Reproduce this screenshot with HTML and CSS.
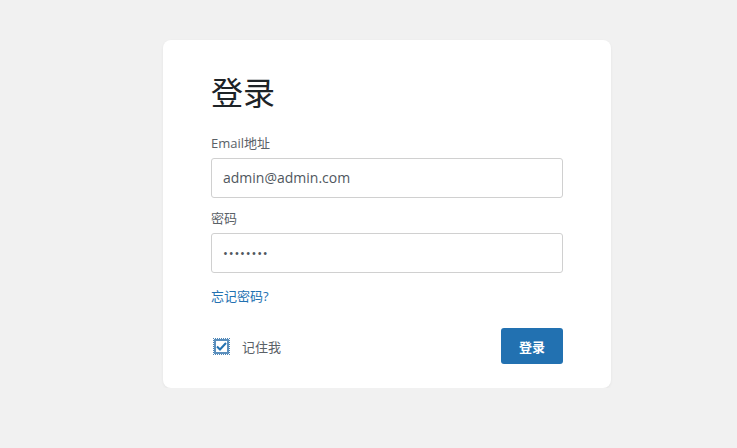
FILE: index.html
```html
<!DOCTYPE html>
<html lang="zh">
<head>
<meta charset="utf-8">
<link rel="stylesheet" href="styles.css">
</head>
<body>
<div class="page">
  <form class="card">
    <h1 class="title">登录</h1>
    <label class="label">Email地址</label>
    <div class="input">admin@admin.com</div>
    <label class="label">密码</label>
    <div class="input pw">••••••••</div>
    <a class="forgot">忘记密码?</a>
    <div class="footer">
      <div class="remember">
        <span class="check"><svg width="11" height="9" viewBox="0 0 11 9"><path d="M1 4.5 L4 7.5 L10 1" fill="none" stroke="#2271b1" stroke-width="2"/></svg></span>
        <span class="remember-text">记住我</span>
      </div>
      <button class="btn" type="button">登录</button>
    </div>
  </form>
</div>
</body>
</html>
```
FILE: styles.css
```css
html, body { margin: 0; padding: 0; }
body {
  background: #f1f1f1;
  font-family: "Open Sans", "Noto Sans CJK SC", sans-serif;
  color: #3c434a;
}
.page {
  display: flex;
  padding: 40px 0 0 163px;
}
.card {
  box-sizing: border-box;
  width: 448px;
  height: 348px;
  background: #fff;
  border-radius: 8px;
  box-shadow: 0 1px 3px rgba(0,0,0,0.06);
  padding: 29px 48px 0 48px;
  display: flex;
  flex-direction: column;
}
.title {
  margin: 0;
  font-size: 32px;
  font-weight: 400;
  line-height: 44px;
  color: #1d2327;
  font-family: "Noto Sans CJK SC", sans-serif;
}
.label {
  display: block;
  font-size: 13px;
  line-height: 18px;
  color: #5a6167;
  margin-top: 20px;
  margin-bottom: 6px;
}
.title + .label { margin-top: 21px; }
.input + .label { margin-top: 11px; }
.input {
  box-sizing: border-box;
  height: 40px;
  border: 1px solid #d0d0d0;
  border-radius: 3px;
  padding: 0 11px;
  font-size: 14px;
  line-height: 38px;
  color: #50575e;
}
.pw {
  font-size: 13px;
  letter-spacing: 0.8px;
  color: #50575e;
}
.forgot {
  margin-top: 14px;
  font-size: 13px;
  line-height: 18px;
  color: #2271b1;
}
.footer {
  margin-top: 23px;
  display: flex;
  align-items: center;
  justify-content: space-between;
}
.remember {
  display: flex;
  align-items: center;
  gap: 12px;
  padding-left: 2px;
}
.check {
  box-sizing: border-box;
  width: 17px;
  height: 17px;
  border: 1px dotted #4f86b6;
  box-shadow: inset 0 0 0 2px #5b8fbd;
  display: flex;
  align-items: center;
  justify-content: center;
}
.remember-text {
  font-size: 13px;
  color: #5a6167;
}
.btn {
  width: 62px;
  height: 36px;
  border: none;
  border-radius: 3px;
  background: #2271b1;
  color: #fff;
  font-family: "Noto Sans CJK SC", sans-serif;
  font-size: 13px;
  font-weight: 600;
}
```
